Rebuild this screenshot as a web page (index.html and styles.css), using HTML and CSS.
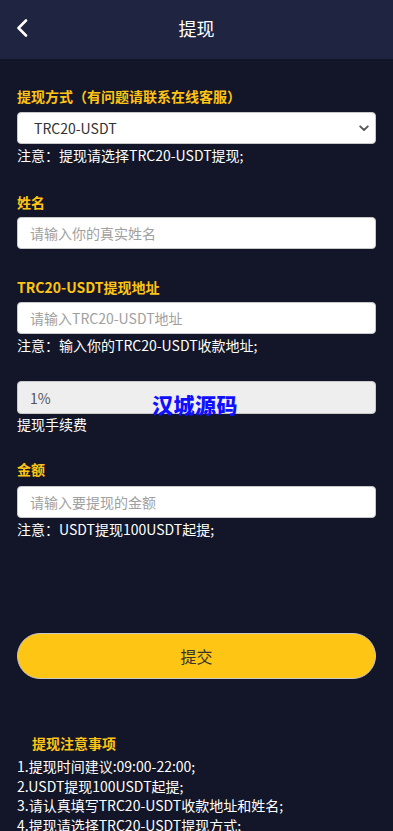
FILE: index.html
```html
<!DOCTYPE html>
<html lang="zh-CN">
<head>
<meta charset="utf-8">
<meta name="viewport" content="width=device-width, initial-scale=1">
<title>提现</title>
<link rel="stylesheet" href="styles.css">
</head>
<body>
<header class="topbar">
  <a class="back" href="#" aria-label="返回">
    <svg width="12" height="18" viewBox="0 0 12 18"><path d="M10 1.5 L2.5 9 L10 16.5" fill="none" stroke="#ffffff" stroke-width="2.6" stroke-linecap="round" stroke-linejoin="round"/></svg>
  </a>
  <h1 class="title">提现</h1>
</header>

<main class="content">
  <div class="group group-method">
    <div class="label">提现方式（有问题请联系在线客服）</div>
    <div class="select">
      <span class="select-text">TRC20-USDT</span>
      <svg class="caret" width="10" height="7" viewBox="0 0 10 7"><path d="M1.2 1.3 L5 5 L8.8 1.3" fill="none" stroke="#555" stroke-width="1.8" stroke-linecap="round" stroke-linejoin="round"/></svg>
    </div>
    <div class="note">注意：提现请选择TRC20-USDT提现;</div>
  </div>

  <div class="group group-name">
    <div class="label">姓名</div>
    <input class="field" type="text" placeholder="请输入你的真实姓名">
  </div>

  <div class="group group-addr">
    <div class="label">TRC20-USDT提现地址</div>
    <input class="field" type="text" placeholder="请输入TRC20-USDT地址">
    <div class="note">注意：输入你的TRC20-USDT收款地址;</div>
  </div>

  <div class="group group-fee">
    <div class="field field-readonly">1%</div>
    <div class="note">提现手续费</div>
    <div class="watermark">汉城源码</div>
  </div>

  <div class="group group-amount">
    <div class="label">金额</div>
    <input class="field" type="text" placeholder="请输入要提现的金额">
    <div class="note">注意：USDT提现100USDT起提;</div>
  </div>

  <button class="submit" type="button">提交</button>

  <section class="tips">
    <div class="tips-title">提现注意事项</div>
    <div class="tips-item">1.提现时间建议:09:00-22:00;</div>
    <div class="tips-item">2.USDT提现100USDT起提;</div>
    <div class="tips-item">3.请认真填写TRC20-USDT收款地址和姓名;</div>
    <div class="tips-item">4.提现请选择TRC20-USDT提现方式;</div>
  </section>
</main>
</body>
</html>
```

FILE: styles.css
```css
* { box-sizing: border-box; }

html, body {
  margin: 0;
  padding: 0;
  background: #121628;
}

body {
  font-family: "Noto Sans CJK SC", "Noto Sans", sans-serif;
  font-size: 14px;
  color: #ffffff;
  overflow: hidden;
  height: 831px;
}

.topbar {
  height: 59px;
  background: #1f2440;
  display: flex;
  align-items: center;
  justify-content: center;
  position: relative;
}

.back {
  position: absolute;
  left: 16px;
  top: 19px;
  display: flex;
}

.title {
  margin: 0;
  font-size: 18px;
  font-weight: 400;
  line-height: 24px;
  color: #ffffff;
  margin-top: -4px;
}

.content {
  padding: 27px 17px 0 17px;
}

.group { position: relative; }

.label {
  font-weight: 700;
  color: #ffc414;
  font-size: 14px;
  line-height: 20px;
  margin-bottom: 6px;
}

.select,
.field {
  display: flex;
  align-items: center;
  width: 100%;
  height: 32px;
  background: #ffffff;
  border: 1px solid #c8c8c8;
  border-radius: 4px;
  font-family: "Noto Sans CJK SC", "Noto Sans", sans-serif;
  font-size: 14px;
  color: #333;
  padding: 0 12px;
  outline: none;
}

.field::placeholder { color: #a0a0a0; }

.select {
  justify-content: space-between;
  padding: 0 6px 0 16px;
}

.select-text { color: #333; }

.caret { margin-right: 0; }

.field-readonly {
  background: #eeeeee;
  color: #555;
  height: 33px;
}

.note {
  font-size: 14px;
  line-height: 20px;
  color: #ffffff;
  margin-top: 1px;
}

.group-name { margin-top: 27px; }
.group-name .label { margin-bottom: 5px; }

.group-addr { margin-top: 28px; }
.group-addr .label { margin-bottom: 5px; }

.group-fee { margin-top: 26px; }
.group-fee .note { margin-top: 0; }

.group-amount { margin-top: 25px; }
.group-amount .label { margin-bottom: 7px; }
.group-amount .note { margin-top: 1px; }

.watermark {
  position: absolute;
  left: 135px;
  top: 11px;
  font-size: 21px;
  line-height: 24px;
  font-weight: 900;
  color: #1010ff;
  letter-spacing: 0.5px;
}

.submit {
  display: block;
  width: 100%;
  height: 46px;
  margin-top: 94px;
  background: #ffc514;
  border: 1px solid #c9c9c9;
  border-radius: 23px;
  font-family: "Noto Sans CJK SC", "Noto Sans", sans-serif;
  font-size: 16px;
  color: #333333;
  cursor: pointer;
}

.tips {
  margin-top: 54px;
}

.tips-title {
  padding-left: 15px;
  font-weight: 700;
  color: #ffc414;
  font-size: 14px;
  line-height: 20px;
  margin-bottom: 4px;
}

.tips-item {
  font-size: 14px;
  line-height: 19.5px;
  color: #ffffff;
}
```
